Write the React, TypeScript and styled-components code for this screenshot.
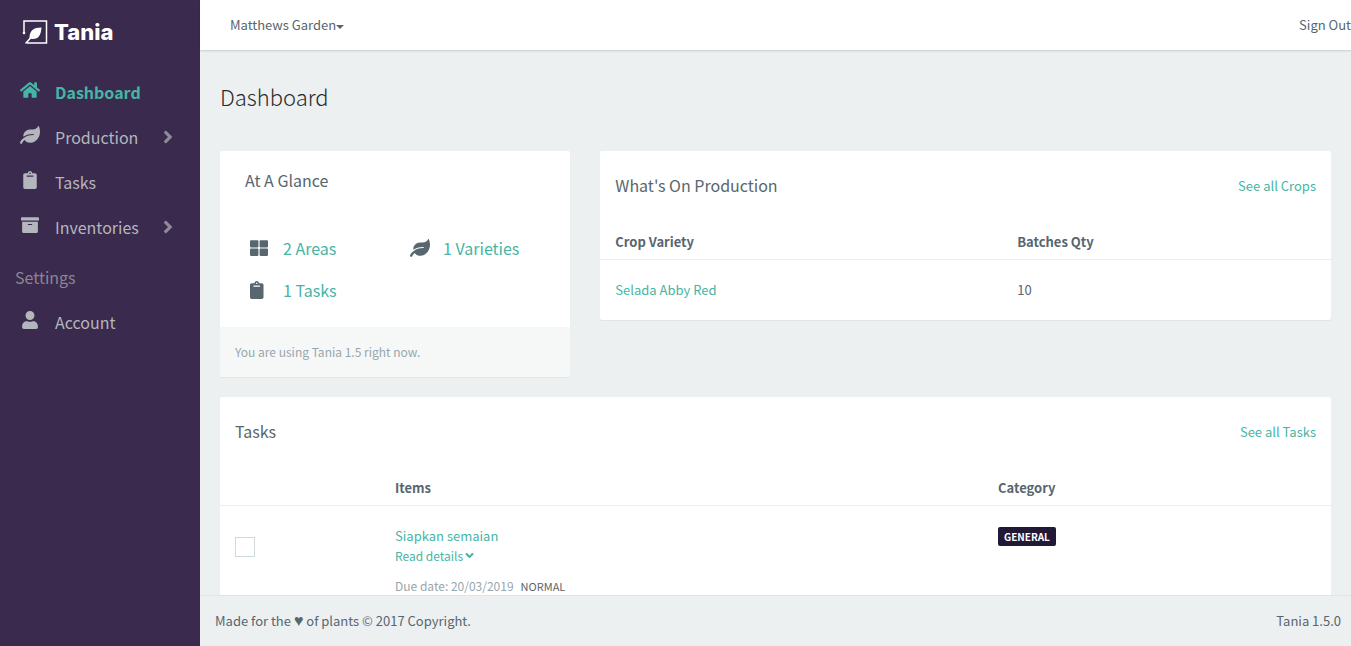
import React from "react";
import styled, { createGlobalStyle } from "styled-components";
import {
  FaHome,
  FaLeaf,
  FaClipboard,
  FaArchive,
  FaUser,
  FaThLarge,
  FaAngleRight,
  FaAngleDown,
} from "react-icons/fa";

const color = {
  sidebar: "#3a2a4d",
  badge: "#211936",
  accent: "#46b5a5",
  text: "#58666e",
  muted: "#98a6ad",
  page: "#ecf0f1",
  line: "#eaeff0",
};

const GlobalStyle = createGlobalStyle`
  *, *::before, *::after { box-sizing: border-box; }
  body {
    margin: 0;
    background: ${color.page};
    color: ${color.text};
    font-family: "Noto Sans CJK SC", "Noto Sans", sans-serif;
    font-size: 13px;
    line-height: 20px;
  }
  a { color: ${color.accent}; text-decoration: none; }
  button { font: inherit; }
`;

const Shell = styled.div`
  display: flex;
  height: 100vh;
`;

const Sidebar = styled.aside`
  flex: 0 0 200px;
  background: ${color.sidebar};
`;

const Brand = styled.a`
  display: flex;
  align-items: center;
  gap: 6px;
  height: 50px;
  margin-bottom: 19px;
  padding: 14px 22px 0;
  color: #fff;
  font-family: Inter, sans-serif;
  font-size: 22px;
  font-weight: 800;
  line-height: 36px;
`;

const NavList = styled.ul`
  margin: 0;
  padding: 0;
  list-style: none;
`;

const NavLink = styled.a<{ $active?: boolean }>`
  display: flex;
  align-items: center;
  height: 45px;
  padding: 0 22px 0 15px;
  color: ${(p) => (p.$active ? color.accent : "#b4b6bd")};
  font-size: 16px;
  font-weight: ${(p) => (p.$active ? 700 : 400)};
`;

const NavIcon = styled.span`
  display: flex;
  justify-content: center;
  width: 30px;
  margin-right: 10px;
  padding-bottom: 4px;
  font-size: 18px;
`;

const NavLabel = styled.span`
  flex: 1;
`;

const NavArrow = styled(FaAngleRight)`
  color: #8e8a99;
  font-size: 20px;
`;

const NavHeading = styled.li`
  padding: 18px 15px 12px;
  color: #8b8595;
  font-size: 16px;
`;

const Page = styled.div`
  display: flex;
  flex: 1;
  flex-direction: column;
  min-width: 0;
`;

const TopBar = styled.header`
  display: flex;
  flex: 0 0 50px;
  align-items: center;
  justify-content: space-between;
  padding-left: 30px;
  background: #fff;
  box-shadow: 0 1px 2px rgba(0, 0, 0, 0.15);
`;

const GardenButton = styled.button`
  display: flex;
  align-items: center;
  padding: 0;
  border: 0;
  background: none;
  color: ${color.text};
`;

const Caret = styled.span`
  margin-top: 3px;
  border: 4px solid transparent;
  border-top-color: currentColor;
  border-bottom: 0;
`;

const SignOut = styled.a`
  color: ${color.text};
`;

const Content = styled.main`
  flex: 1;
  min-height: 0;
  padding: 0 20px;
  overflow-y: auto;
  scrollbar-width: none;
`;

const PageTitle = styled.h1`
  margin: 0;
  padding: 28px 0 37px;
  color: #2b2b2b;
  font-size: 22px;
  font-weight: 300;
  line-height: 36px;
`;

const Row = styled.div`
  display: flex;
  align-items: flex-start;
  margin: 0 -15px;
`;

const Column = styled.div<{ $span: number }>`
  flex: 0 0 calc(100% * ${(p) => p.$span} / 12);
  min-width: 0;
  padding: 0 15px;
`;

const Card = styled.section`
  margin-bottom: 20px;
  border-radius: 2px;
  background: #fff;
  box-shadow: 0 1px 1px rgba(0, 0, 0, 0.05);
  overflow: hidden;
`;

const CardTitle = styled.h2`
  margin: 0;
  padding-bottom: 2px;
  font-size: 16px;
  font-weight: 400;
`;

const CardHeader = styled.div`
  display: flex;
  align-items: center;
  justify-content: space-between;
  height: 70px;
  padding: 0 15px;
`;

const GlanceBody = styled.div`
  padding: 19px 25px 16px;
`;

const GlanceGrid = styled.div`
  display: grid;
  grid-template-columns: 160px 1fr;
  margin: 35px 5px 0;
`;

const GlanceItem = styled.a`
  display: flex;
  align-items: center;
  height: 42px;
  font-size: 16px;
`;

const GlanceIcon = styled.span`
  display: flex;
  width: 33px;
  color: ${color.text};
  font-size: 18px;
`;

const GlanceFooter = styled.footer`
  padding: 15px;
  background: #f6f8f8;
  color: ${color.muted};
  font-size: 12px;
`;

const Table = styled.table`
  width: 100%;
  border-collapse: collapse;
  table-layout: fixed;
`;

const Th = styled.th<{ $width?: string }>`
  width: ${(p) => p.$width ?? "auto"};
  height: 38px;
  padding: 4px 15px 0;
  border-bottom: 1px solid ${color.line};
  font-weight: 700;
  text-align: left;
`;

const Td = styled.td`
  padding: 20px 15px;
  vertical-align: top;
`;

const TaskCheck = styled.input`
  display: block;
  width: 20px;
  height: 20px;
  margin: 11px 0 0;
  appearance: none;
  border: 1px solid #cfdadd;
  background: #fff;
`;

const DetailsButton = styled.button`
  display: flex;
  align-items: center;
  padding: 0;
  border: 0;
  background: none;
  color: ${color.accent};
  font-size: 12px;
`;

const DueDate = styled.div`
  display: flex;
  gap: 7px;
  margin-top: 10px;
  color: ${color.muted};
  font-size: 12px;
`;

const Priority = styled.span`
  color: ${color.text};
  font-size: 11px;
`;

const Badge = styled.span`
  display: inline-block;
  padding: 0 6px;
  border-radius: 2px;
  background: ${color.badge};
  color: #fff;
  font-size: 10px;
  font-weight: 700;
  line-height: 19px;
  vertical-align: bottom;
`;

const PageFooter = styled.footer`
  display: flex;
  flex: 0 0 51px;
  align-items: center;
  justify-content: space-between;
  padding: 0 10px 0 15px;
  border-top: 1px solid #dee5e7;
`;

const Heart = styled.span`
  font-family: "Liberation Sans", sans-serif;
  font-size: 16px;
`;

const LogoMark = () => (
  <svg width="26" height="26" viewBox="0 0 26 26" aria-hidden="true">
    <path d="M2 13V2H24.500V24H5" fill="none" stroke="#fff" strokeWidth="1.500" />
    <circle cx="2" cy="14" r="1.300" fill="#fff" />
    <path
      d="M4 24 9 18.500"
      fill="none"
      stroke="#fff"
      strokeWidth="1.600"
      strokeLinecap="round"
    />
    <path d="M19.500 8.500C12 8.500 7 11.500 7.500 19.500 15.500 21.500 19 17 19.500 8.500Z" fill="#fff" />
  </svg>
);

export default function App() {
  return (
    <>
      <GlobalStyle />
      <Shell>
        <Sidebar>
          <Brand href="#">
            <LogoMark />
            Tania
          </Brand>
          <nav>
            <NavList>
              <li>
                <NavLink href="#" $active>
                  <NavIcon><FaHome size={20} /></NavIcon>
                  <NavLabel>Dashboard</NavLabel>
                </NavLink>
              </li>
              <li>
                <NavLink href="#">
                  <NavIcon><FaLeaf size={20} /></NavIcon>
                  <NavLabel>Production</NavLabel>
                  <NavArrow />
                </NavLink>
              </li>
              <li>
                <NavLink href="#">
                  <NavIcon><FaClipboard /></NavIcon>
                  <NavLabel>Tasks</NavLabel>
                </NavLink>
              </li>
              <li>
                <NavLink href="#">
                  <NavIcon><FaArchive /></NavIcon>
                  <NavLabel>Inventories</NavLabel>
                  <NavArrow />
                </NavLink>
              </li>
              <NavHeading>Settings</NavHeading>
              <li>
                <NavLink href="#">
                  <NavIcon><FaUser /></NavIcon>
                  <NavLabel>Account</NavLabel>
                </NavLink>
              </li>
            </NavList>
          </nav>
        </Sidebar>
        <Page>
          <TopBar>
            <GardenButton type="button">
              Matthews Garden
              <Caret />
            </GardenButton>
            <SignOut href="#">Sign Out</SignOut>
          </TopBar>
          <Content>
            <PageTitle>Dashboard</PageTitle>
            <Row>
              <Column $span={4}>
                <Card>
                  <GlanceBody>
                    <CardTitle>At A Glance</CardTitle>
                    <GlanceGrid>
                      <GlanceItem href="#">
                        <GlanceIcon><FaThLarge /></GlanceIcon>
                        2 Areas
                      </GlanceItem>
                      <GlanceItem href="#">
                        <GlanceIcon><FaLeaf size={20} /></GlanceIcon>
                        1 Varieties
                      </GlanceItem>
                      <GlanceItem href="#">
                        <GlanceIcon><FaClipboard preserveAspectRatio="xMinYMid meet" /></GlanceIcon>
                        1 Tasks
                      </GlanceItem>
                    </GlanceGrid>
                  </GlanceBody>
                  <GlanceFooter>You are using Tania 1.5 right now.</GlanceFooter>
                </Card>
              </Column>
              <Column $span={8}>
                <Card>
                  <CardHeader>
                    <CardTitle>What's On Production</CardTitle>
                    <a href="#">See all Crops</a>
                  </CardHeader>
                  <Table>
                    <thead>
                      <tr>
                        <Th $width="55%">Crop Variety</Th>
                        <Th>Batches Qty</Th>
                      </tr>
                    </thead>
                    <tbody>
                      <tr>
                        <Td><a href="#">Selada Abby Red</a></Td>
                        <Td>10</Td>
                      </tr>
                    </tbody>
                  </Table>
                </Card>
              </Column>
            </Row>
            <Card>
              <CardHeader>
                <CardTitle>Tasks</CardTitle>
                <a href="#">See all Tasks</a>
              </CardHeader>
              <Table>
                <thead>
                  <tr>
                    <Th $width="160px" aria-label="Done" />
                    <Th>Items</Th>
                    <Th $width="348px">Category</Th>
                  </tr>
                </thead>
                <tbody>
                  <tr>
                    <Td>
                      <TaskCheck type="checkbox" aria-label="Siapkan semaian" />
                    </Td>
                    <Td>
                      <a href="#">Siapkan semaian</a>
                      <DetailsButton type="button">
                        Read details
                        <FaAngleDown size={13} />
                      </DetailsButton>
                      <DueDate>
                        Due date: 20/03/2019
                        <Priority>NORMAL</Priority>
                      </DueDate>
                    </Td>
                    <Td>
                      <Badge>GENERAL</Badge>
                    </Td>
                  </tr>
                </tbody>
              </Table>
            </Card>
          </Content>
          <PageFooter>
            <span>Made for the <Heart>♥</Heart> of plants © 2017 Copyright.</span>
            <span>Tania 1.5.0</span>
          </PageFooter>
        </Page>
      </Shell>
    </>
  );
}
